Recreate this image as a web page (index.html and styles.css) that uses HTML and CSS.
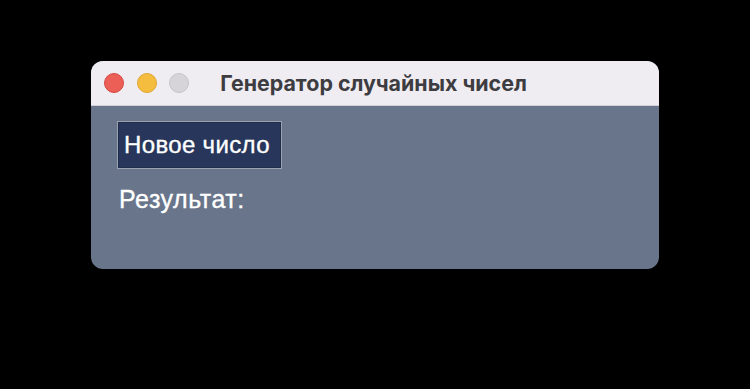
FILE: index.html
```html
<!DOCTYPE html>
<html lang="ru">
<head>
<meta charset="utf-8">
<title>Генератор случайных чисел</title>
<link rel="stylesheet" href="styles.css">
</head>
<body>
<div class="window">
  <div class="titlebar">
    <div class="lights">
      <span class="light red"></span>
      <span class="light yellow"></span>
      <span class="light gray"></span>
    </div>
    <div class="title">Генератор случайных чисел</div>
  </div>
  <div class="content">
    <button class="btn">Новое число</button>
    <div class="result">Результат:</div>
  </div>
</div>
</body>
</html>
```

FILE: styles.css
```css
html, body {
  margin: 0;
  background: #000;
}
body {
  width: 750px;
  height: 389px;
  padding: 61px 0 0 91px;
  box-sizing: border-box;
  font-family: "Liberation Sans", Arial, sans-serif;
}
.window {
  width: 568px;
  height: 208px;
  border-radius: 12px;
  overflow: hidden;
  background: #69758a;
  display: flex;
  flex-direction: column;
}
.titlebar {
  height: 45px;
  flex: none;
  background: #efedf2;
  border-bottom: 1px solid #d2d0d6;
  box-sizing: border-box;
  position: relative;
  display: flex;
  align-items: center;
}
.lights {
  display: flex;
  gap: 12.5px;
  padding-left: 13px;
}
.light {
  width: 20px;
  height: 20px;
  border-radius: 50%;
  box-sizing: border-box;
}
.red { background: #ec5f57; border: 1px solid #d5473f; }
.yellow { background: #f5bd3f; border: 1px solid #dea530; }
.gray { background: #d6d4d9; border: 1px solid #c5c3c8; }
.title {
  position: absolute;
  left: 0;
  right: 0;
  top: 0;
  bottom: 0;
  display: flex;
  align-items: center;
  justify-content: center;
  font-family: "Inter", "Liberation Sans", sans-serif;
  font-weight: 700;
  font-size: 21.4px;
  color: #3d3c40;
  padding-right: 3px;
  pointer-events: none;
}
.content {
  padding: 15px 0 0 26px;
  display: flex;
  flex-direction: column;
  align-items: flex-start;
}
.btn {
  width: 165px;
  height: 48px;
  margin: 0;
  padding: 0 0 0 6px;
  background: #27365a;
  border: 1px solid #9aa2b2;
  box-shadow: inset 0 0 0 1px #1f2c4a;
  color: #fff;
  font-family: "Liberation Sans", Arial, sans-serif;
  font-size: 24px;
  letter-spacing: 0.35px;
  -webkit-text-stroke: 0.35px #fff;
  text-align: left;
  cursor: pointer;
}
.result {
  margin: 16px 0 0 2px;
  color: #fff;
  font-size: 25px;
  letter-spacing: 0.5px;
  line-height: 28px;
  -webkit-text-stroke: 0.35px #fff;
}
```
